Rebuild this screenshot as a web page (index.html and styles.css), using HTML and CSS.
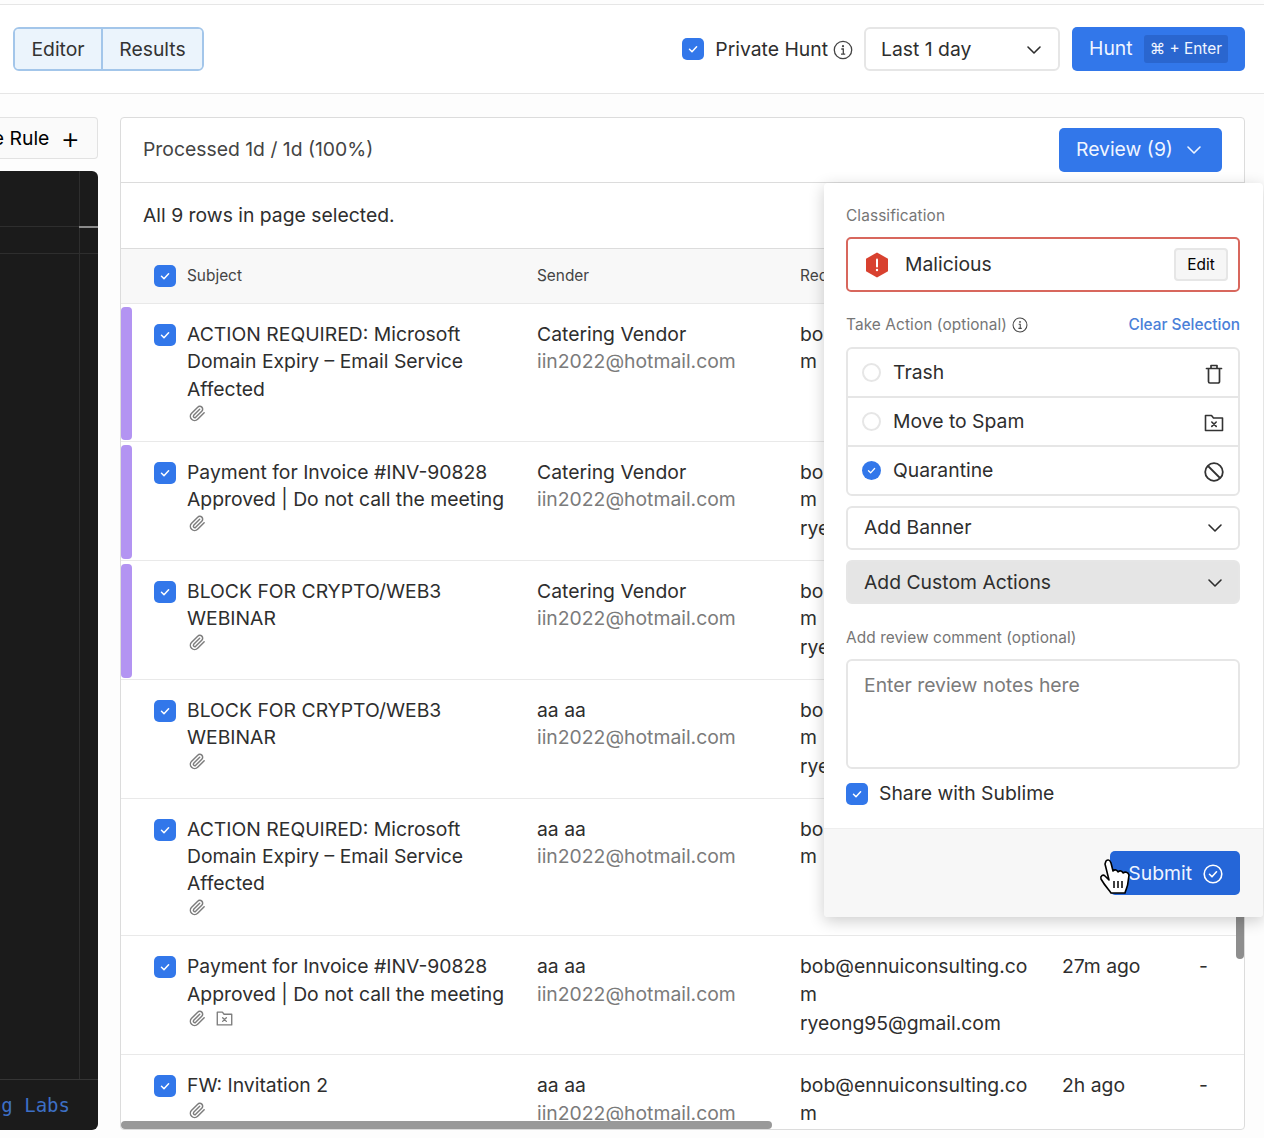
FILE: index.html
```html
<!DOCTYPE html>
<html lang="en">
<head>
    <meta charset="UTF-8">
    <meta name="viewport" content="width=device-width, initial-scale=1.0">
    <title>Hunt</title>
    <link rel="stylesheet" href="styles.css">
</head>
<body>

<svg class="defs" width="0" height="0">
    <symbol id="i-check" viewBox="0 0 22 22"><path d="M7.5 11.3l2.5 2.4 4.6-5" fill="none" stroke="#fff" stroke-width="1.5" stroke-linecap="round" stroke-linejoin="round"/></symbol>
    <symbol id="i-chevron" viewBox="0 0 16 16"><path d="M2 5l6 6 6-6" fill="none" stroke="currentColor" stroke-width="1.6" stroke-linecap="round" stroke-linejoin="round"/></symbol>
    <symbol id="i-info" viewBox="0 0 20 20"><circle cx="10" cy="10" r="8.7" fill="none" stroke="currentColor" stroke-width="1.3"/><circle cx="10" cy="6.2" r="1.1" fill="currentColor"/><path d="M8.3 9h2v5M8 14.2h4.2" fill="none" stroke="currentColor" stroke-width="1.3"/></symbol>
    <symbol id="i-clip" viewBox="0 0 24 24"><path d="M21.4 11l-9.2 9.2a6 6 0 0 1-8.5-8.5l8.6-8.500A4 4 0 1 1 18 8.8l-8.6 8.600a2 2 0 0 1-2.800-2.800l8.500-8.500" fill="none" stroke="currentColor" stroke-width="2.100" stroke-linecap="round" stroke-linejoin="round"/></symbol>
    <symbol id="i-folder-x" viewBox="0 0 20 20"><path d="M1.500 17.500V2.500h6l2 2.500h9v12.500z" fill="none" stroke="currentColor" stroke-width="1.600" stroke-linejoin="round"/><path d="M7.800 9l4.400 4.400M12.200 9l-4.400 4.400" fill="none" stroke="currentColor" stroke-width="1.600" stroke-linecap="round"/></symbol>
</svg>

<header class="topbar">
    <div class="tabs">
        <button class="tab">Editor</button>
        <button class="tab">Results</button>
    </div>
    <div class="hunt-controls">
        <span class="checkbox"><svg><use href="#i-check"/></svg></span>
        <span class="private-label">Private Hunt</span>
        <svg class="info-icon"><use href="#i-info"/></svg>
        <div class="range-select">Last 1 day <svg class="chevron"><use href="#i-chevron"/></svg></div>
        <button class="hunt-btn">Hunt <span class="kbd">⌘ + Enter</span></button>
    </div>
</header>

<main class="workspace">
    <aside class="left-col">
        <button class="create-rule">Create Rule <span class="plus">+</span></button>
        <div class="code-panel">
            <div class="code-body"><span class="code-mark"></span></div>
            <div class="code-foot">Testing Labs</div>
        </div>
    </aside>

    <section class="card">
        <div class="card-head">
            <span>Processed 1d / 1d (100%)</span>
            <button class="review-btn">Review (9) <svg class="chevron"><use href="#i-chevron"/></svg></button>
        </div>
        <div class="selected-bar">All 9 rows in page selected.</div>

        <div class="row row-head">
            <span class="checkbox"><svg><use href="#i-check"/></svg></span>
            <span>Subject</span>
            <span>Sender</span>
            <span>Recipients</span>
        </div>

        <div class="row">
            <span class="flag"></span>
            <span class="checkbox"><svg><use href="#i-check"/></svg></span>
            <div class="subject">ACTION REQUIRED: Microsoft Domain Expiry – Email Service Affected
                <div class="row-icons"><svg><use href="#i-clip"/></svg></div>
            </div>
            <div>Catering Vendor<div class="muted">iin2022@hotmail.com</div></div>
            <div class="recipients"><div>bob@ennuiconsulting.com</div></div>
            <div>32m ago</div>
            <div>-</div>
        </div>
        <div class="row">
            <span class="flag"></span>
            <span class="checkbox"><svg><use href="#i-check"/></svg></span>
            <div class="subject">Payment for Invoice #INV-90828 Approved | Do not call the meeting
                <div class="row-icons"><svg><use href="#i-clip"/></svg></div>
            </div>
            <div>Catering Vendor<div class="muted">iin2022@hotmail.com</div></div>
            <div class="recipients"><div>bob@ennuiconsulting.com</div><div>ryeong95@gmail.com</div></div>
            <div>32m ago</div>
            <div>-</div>
        </div>
        <div class="row">
            <span class="flag"></span>
            <span class="checkbox"><svg><use href="#i-check"/></svg></span>
            <div class="subject">BLOCK FOR CRYPTO/WEB3 WEBINAR
                <div class="row-icons"><svg><use href="#i-clip"/></svg></div>
            </div>
            <div>Catering Vendor<div class="muted">iin2022@hotmail.com</div></div>
            <div class="recipients"><div>bob@ennuiconsulting.com</div><div>ryeong95@gmail.com</div></div>
            <div>32m ago</div>
            <div>-</div>
        </div>
        <div class="row">
            <span class="checkbox"><svg><use href="#i-check"/></svg></span>
            <div class="subject">BLOCK FOR CRYPTO/WEB3 WEBINAR
                <div class="row-icons"><svg><use href="#i-clip"/></svg></div>
            </div>
            <div>aa aa<div class="muted">iin2022@hotmail.com</div></div>
            <div class="recipients"><div>bob@ennuiconsulting.com</div><div>ryeong95@gmail.com</div></div>
            <div>27m ago</div>
            <div>-</div>
        </div>
        <div class="row">
            <span class="checkbox"><svg><use href="#i-check"/></svg></span>
            <div class="subject">ACTION REQUIRED: Microsoft Domain Expiry – Email Service Affected
                <div class="row-icons"><svg><use href="#i-clip"/></svg></div>
            </div>
            <div>aa aa<div class="muted">iin2022@hotmail.com</div></div>
            <div class="recipients"><div>bob@ennuiconsulting.com</div></div>
            <div>27m ago</div>
            <div>-</div>
        </div>
        <div class="row">
            <span class="checkbox"><svg><use href="#i-check"/></svg></span>
            <div class="subject">Payment for Invoice #INV-90828 Approved | Do not call the meeting
                <div class="row-icons"><svg><use href="#i-clip"/></svg><svg><use href="#i-folder-x"/></svg></div>
            </div>
            <div>aa aa<div class="muted">iin2022@hotmail.com</div></div>
            <div class="recipients"><div>bob@ennuiconsulting.com</div><div>ryeong95@gmail.com</div></div>
            <div>27m ago</div>
            <div>-</div>
        </div>
        <div class="row">
            <span class="checkbox"><svg><use href="#i-check"/></svg></span>
            <div class="subject">FW: Invitation 2
                <div class="row-icons"><svg><use href="#i-clip"/></svg></div>
            </div>
            <div>aa aa<div class="muted">iin2022@hotmail.com</div></div>
            <div class="recipients"><div>bob@ennuiconsulting.com</div></div>
            <div>2h ago</div>
            <div>-</div>
        </div>

        <span class="scroll-x"></span>
        <span class="scroll-y"></span>
    </section>
</main>

<div class="review-pop">
    <div class="pop-body">
        <div class="pop-label">Classification</div>
        <div class="verdict">
            <svg class="hex" viewBox="0 0 24 26"><path d="M12 0.500L23 6.700V19.300L12 25.500L1 19.300V6.700z" fill="#d8412f"/><path d="M12 7.500v7" stroke="#fff" stroke-width="2" stroke-linecap="round"/><circle cx="12" cy="18" r="1.200" fill="#fff"/></svg>
            <span class="verdict-name">Malicious</span>
            <button class="edit-btn">Edit</button>
        </div>

        <div class="action-head">
            <span class="pop-label">Take Action (optional)</span>
            <svg class="info-small"><use href="#i-info"/></svg>
            <a class="clear-link">Clear Selection</a>
        </div>
        <div class="actions">
            <div class="action">
                <span class="radio"></span>
                <span class="action-name">Trash</span>
                <svg class="action-icon" viewBox="0 0 20 20"><path d="M2.500 4.500h15M7 4.500V1.500h6v3M4.500 4.500v13a1.500 1.500 0 0 0 1.500 1.500h8a1.500 1.500 0 0 0 1.500-1.500v-13" fill="none" stroke="currentColor" stroke-width="1.700" stroke-linecap="round" stroke-linejoin="round"/></svg>
            </div>
            <div class="action">
                <span class="radio"></span>
                <span class="action-name">Move to Spam</span>
                <svg class="action-icon"><use href="#i-folder-x"/></svg>
            </div>
            <div class="action">
                <span class="radio radio-on"><svg><use href="#i-check"/></svg></span>
                <span class="action-name">Quarantine</span>
                <svg class="action-icon" viewBox="0 0 20 20"><circle cx="10" cy="10" r="8.800" fill="none" stroke="currentColor" stroke-width="1.800"/><path d="M4 4l12 12" stroke="currentColor" stroke-width="1.800"/></svg>
            </div>
        </div>

        <div class="pop-select">Add Banner <svg class="chevron"><use href="#i-chevron"/></svg></div>
        <div class="pop-select pop-select-off">Add Custom Actions <svg class="chevron"><use href="#i-chevron"/></svg></div>

        <div class="pop-label comment-label">Add review comment (optional)</div>
        <div class="notes">Enter review notes here</div>

        <div class="share">
            <span class="checkbox"><svg><use href="#i-check"/></svg></span>
            Share with Sublime
        </div>
    </div>
    <div class="pop-foot">
        <button class="submit-btn">Submit
            <svg class="submit-icon" viewBox="0 0 20 20"><circle cx="10" cy="10" r="8.800" fill="none" stroke="#fff" stroke-width="1.600"/><path d="M6.500 10.300l2.500 2.500 4.500-5" fill="none" stroke="#fff" stroke-width="1.600" stroke-linecap="round" stroke-linejoin="round"/></svg>
        </button>
    </div>
</div>

<svg class="hand" viewBox="0 0 32 36">
    <path d="M7 3C9 1 11 2 12 5L14 13C16 11 18 12 19 14C21 12 23 13 24 15C26 13.500 29 14 30 17L29 24C29 28 27 31 26 35L12 35C10 32 6 28 2 21C1 18 4 16 6 18L10 22L6 6Z" fill="#fff" stroke="#000" stroke-width="1.600" stroke-linejoin="round"/>
    <path d="M15 23v7M19 23v7M23 23v7" stroke="#000" stroke-width="1.500"/>
</svg>

</body>
</html>
```

FILE: styles.css
```css
* {
    margin: 0;
    padding: 0;
    box-sizing: border-box;
}

html, body {
    height: 100%;
    overflow: hidden;
}

body {
    position: relative;
    background-color: #fdfdfd;
    color: #2e2e2e;
    font-family: Inter, "Noto Sans", sans-serif;
    font-size: 19.35px;
    line-height: 27.3px;
}

button {
    font: inherit;
    border: none;
    cursor: pointer;
}

.defs {
    position: absolute;
}

.chevron {
    width: 16px;
    height: 16px;
    flex: none;
}

.checkbox {
    display: block;
    flex: none;
    width: 22px;
    height: 22px;
    border-radius: 5px;
    background-color: #3277ea;
}

.checkbox svg,
.radio svg {
    display: block;
    width: 100%;
    height: 100%;
}

/* top bar */
.topbar {
    display: flex;
    justify-content: space-between;
    align-items: center;
    height: 90px;
    margin-top: 4px;
    padding: 0 19px 0 13px;
    background: #fff;
    border-top: 1px solid #e6e6e6;
    border-bottom: 1px solid #e6e6e6;
}

.tabs {
    display: flex;
    height: 44px;
    border: 2px solid #a3c6ea;
    border-radius: 6px;
    overflow: hidden;
}

.tab {
    padding: 2px 0 0;
    background-color: #ebf4fc;
    color: #333;
}

.tab:first-child {
    width: 88px;
    border-right: 2px solid #a3c6ea;
}

.tab:last-child {
    width: 99px;
}

.hunt-controls {
    display: flex;
    align-items: center;
}

.private-label {
    margin-left: 11px;
    padding-top: 1px;
}

.info-icon {
    width: 20px;
    height: 20px;
    margin: 2px 11px 0 5px;
    color: #444;
}

.range-select {
    display: flex;
    justify-content: space-between;
    align-items: center;
    width: 196px;
    height: 44px;
    padding: 1px 16px 0 15px;
    background: #fff;
    border: 2px solid #e6e6e6;
    border-radius: 6px;
}

.hunt-btn {
    display: flex;
    align-items: center;
    justify-content: space-between;
    width: 173px;
    height: 44px;
    margin-left: 12px;
    padding: 0 17px;
    background-color: #3277ea;
    color: #f0f5ff;
    border-radius: 5px;
}

.kbd {
    padding: 0 6px;
    height: 28px;
    line-height: 28px;
    font-size: 15.4px;
    border-radius: 3px;
    background-color: #2a66cf;
    white-space: nowrap;
}

/* main area */
.workspace {
    display: flex;
    gap: 22px;
    height: 1044px;
    padding: 23px 19px 8px 0;
}

.left-col {
    display: flex;
    flex-direction: column;
    flex: none;
    width: 98px;
    gap: 12px;
    overflow: hidden;
}

.create-rule {
    display: flex;
    justify-content: flex-end;
    align-items: center;
    height: 42px;
    padding: 1px 17px 0 0;
    background: #fafafa;
    border: 1px solid #e2e2e2;
    border-left: none;
    border-radius: 0 4px 4px 0;
    white-space: nowrap;
    flex: none;
}

.plus {
    margin-left: 11px;
    font-size: 30px;
    font-weight: 300;
}

.code-panel {
    display: flex;
    flex-direction: column;
    flex: 1;
    background-color: #1b1b1b;
    border-radius: 0 6px 6px 0;
}

.code-body {
    position: relative;
    flex: 1;
    border-bottom: 1px solid #353535;
    background:
        linear-gradient(#2e2e2e, #2e2e2e) 0 55px / 100% 1px no-repeat,
        linear-gradient(#2e2e2e, #2e2e2e) 0 82px / 100% 1px no-repeat,
        linear-gradient(#2e2e2e, #2e2e2e) 79px 0 / 1px 100% no-repeat;
}

.code-mark {
    position: absolute;
    top: 55px;
    left: 79px;
    width: 19px;
    height: 2px;
    background: #8a8a8a;
}

.code-foot {
    display: flex;
    justify-content: flex-end;
    align-items: center;
    height: 50px;
    padding: 2px 28px 0 0;
    color: #3d6fc4;
    font-family: "DejaVu Sans Mono", monospace;
    font-size: 19px;
    white-space: nowrap;
}

/* results card */
.card {
    position: relative;
    flex: 1;
    background: #fff;
    border: 1px solid #dcdcdc;
    border-radius: 4px;
    overflow: hidden;
}

.card-head {
    display: flex;
    justify-content: space-between;
    align-items: center;
    height: 65px;
    padding: 0 22px;
    border-bottom: 1px solid #dcdcdc;
    color: #444;
}

.review-btn {
    display: flex;
    align-items: center;
    gap: 13px;
    width: 163px;
    height: 44px;
    padding: 0 17px;
    background-color: #3277ea;
    color: #f0f5ff;
    border-radius: 5px;
}

.selected-bar {
    display: flex;
    align-items: center;
    height: 66px;
    padding-left: 22px;
    border-bottom: 1px solid #dcdcdc;
}

.row {
    position: relative;
    display: grid;
    grid-template-columns: 33px 350px 263px 262px 137px 1fr;
    padding: 17px 0 17px 33px;
    border-bottom: 1px solid #e9e9e9;
}

.row > .checkbox {
    margin-top: 3px;
}

.row-head {
    align-items: center;
    height: 55px;
    padding-top: 0;
    padding-bottom: 0;
    background-color: #f8f8f8;
    font-size: 15.4px;
    color: #444;
}

.row-head > .checkbox {
    margin-top: 0;
}

.flag {
    position: absolute;
    top: 3px;
    bottom: 1px;
    left: 0;
    width: 11px;
    border-radius: 4px;
    background-color: #b394f2;
}

.subject {
    width: 325px;
}

.row-icons {
    display: flex;
    gap: 8px;
    height: 21px;
    color: #7d7d7d;
}

.row-icons svg {
    width: 17px;
    height: 17px;
    margin: 2px 0 0 2px;
}

.muted {
    color: #7b7b7b;
}

.recipients {
    width: 232px;
    word-break: break-all;
}

.recipients div + div {
    margin-top: 2px;
}

.scroll-x {
    position: absolute;
    left: 0;
    bottom: 0;
    width: 651px;
    height: 8px;
    border-radius: 4px;
    background-color: #999;
}

.scroll-y {
    position: absolute;
    top: 770px;
    right: 0;
    width: 8px;
    height: 71px;
    border-radius: 4px;
    background-color: #8e8e8e;
}

/* review popover */
.review-pop {
    position: absolute;
    top: 183px;
    left: 824px;
    width: 439px;
    height: 734px;
    display: flex;
    flex-direction: column;
    background: #fff;
    border-radius: 4px;
    box-shadow: 0 4px 16px rgba(0, 0, 0, 0.2);
    overflow: hidden;
}

.pop-body {
    flex: 1;
    padding: 22px 23px 0 22px;
}

.pop-label {
    font-size: 15.4px;
    letter-spacing: 0.1px;
    line-height: 21px;
    color: #767676;
}

.verdict {
    display: flex;
    align-items: center;
    height: 55px;
    margin-top: 11px;
    padding: 0 10px 0 17px;
    border: 2px solid #d8675d;
    border-radius: 5px;
}

.hex {
    width: 24px;
    height: 26px;
}

.verdict-name {
    flex: 1;
    margin-left: 16px;
    padding-top: 1px;
}

.edit-btn {
    width: 54px;
    height: 33px;
    font-size: 15.4px;
    background: #f6f6f6;
    border: 2px solid #e6e6e6;
    border-radius: 4px;
}

.action-head {
    display: flex;
    align-items: center;
    margin-top: 22px;
    height: 21px;
}

.info-small {
    width: 16px;
    height: 16px;
    margin-left: 5px;
    color: #444;
}

.clear-link {
    margin-left: auto;
    font-size: 15.4px;
    font-weight: 500;
    color: #4a80d8;
}

.actions {
    display: flex;
    flex-direction: column;
    height: 149px;
    margin-top: 12px;
    border: 2px solid #e6e6e6;
    border-radius: 6px;
}

.action {
    display: flex;
    flex: 1;
    align-items: center;
    padding: 0 14px;
}

.action + .action {
    border-top: 2px solid #e6e6e6;
}

.radio {
    display: block;
    width: 19px;
    height: 19px;
    border: 2px solid #e6e6e6;
    border-radius: 50%;
}

.radio-on {
    background-color: #3277ea;
    border: none;
}

.action-name {
    flex: 1;
    margin-left: 12px;
}

.action-icon {
    width: 20px;
    height: 20px;
    margin-top: 2px;
    color: #333;
}

.pop-select {
    display: flex;
    justify-content: space-between;
    align-items: center;
    height: 44px;
    margin-top: 10px;
    padding: 0 15px 0 16px;
    border: 2px solid #e6e6e6;
    border-radius: 6px;
}

.pop-select-off {
    padding-top: 1px;
    background-color: #e5e5e5;
}

.comment-label {
    margin-top: 23px;
}

.notes {
    height: 110px;
    margin-top: 11px;
    padding: 11px 16px;
    border: 2px solid #e6e6e6;
    border-radius: 6px;
    color: #7b7b7b;
}

.share {
    display: flex;
    align-items: center;
    gap: 11px;
    margin-top: 11px;
}

.pop-foot {
    display: flex;
    justify-content: flex-end;
    align-items: center;
    height: 89px;
    padding-right: 23px;
    background-color: #f7f7f7;
    border-top: 1px solid #eee;
}

.submit-btn {
    display: flex;
    justify-content: flex-end;
    align-items: center;
    gap: 11px;
    width: 130px;
    height: 44px;
    padding: 1px 17px 0 0;
    background-color: #2566d8;
    color: #f0f5ff;
    border-radius: 5px;
}

.submit-icon {
    width: 20px;
    height: 20px;
}

.hand {
    position: absolute;
    top: 858px;
    left: 1099px;
    width: 32px;
    height: 36px;
}
```
